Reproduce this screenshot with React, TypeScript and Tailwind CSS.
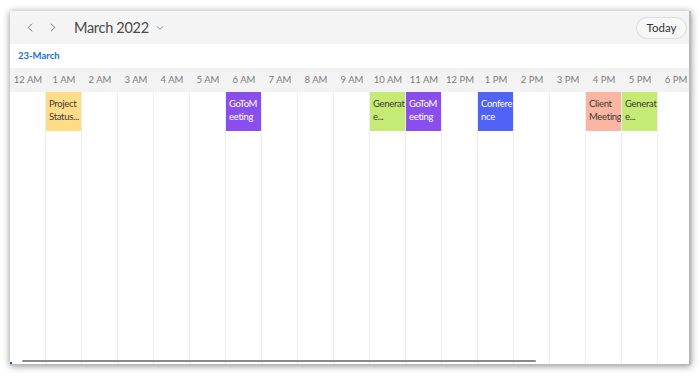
import { ChevronLeft, ChevronRight, ChevronDown } from 'lucide-react'

interface CalEvent {
  hour: number
  lines: string[]
  bg: string
  fg: string
}

const hours = [
  '12 AM', '1 AM', '2 AM', '3 AM', '4 AM', '5 AM', '6 AM', '7 AM', '8 AM', '9 AM',
  '10 AM', '11 AM', '12 PM', '1 PM', '2 PM', '3 PM', '4 PM', '5 PM', '6 PM',
]

const events: CalEvent[] = [
  { hour: 1, lines: ['Project', 'Status...'], bg: 'bg-[#ffdc86]', fg: 'text-[#3a3a3a]' },
  { hour: 6, lines: ['GoToM', 'eeting'], bg: 'bg-[#8a4eee]', fg: 'text-white' },
  { hour: 10, lines: ['Generat', 'e...'], bg: 'bg-[#c6eb74]', fg: 'text-[#3a3a3a]' },
  { hour: 11, lines: ['GoToM', 'eeting'], bg: 'bg-[#8a4eee]', fg: 'text-white' },
  { hour: 13, lines: ['Confere', 'nce'], bg: 'bg-[#5162f7]', fg: 'text-white' },
  { hour: 16, lines: ['Client', 'Meeting'], bg: 'bg-[#fbb6a1]', fg: 'text-[#3a3a3a]' },
  { hour: 17, lines: ['Generat', 'e...'], bg: 'bg-[#c6eb74]', fg: 'text-[#3a3a3a]' },
]

export default function App() {
  return (
    <div className="w-[700px] h-[376px] bg-white pl-[10px] pt-[11px] font-['Lato','Open_Sans',sans-serif]">
      <div className="relative w-[681px] h-[354px] flex flex-col overflow-hidden bg-white border-r-2 border-b border-[#b9b9b9] shadow-[0_1px_7px_rgba(0,0,0,0.45)]">
        {/* Toolbar */}
        <div className="h-[33px] shrink-0 bg-[#f4f4f4] flex items-center pl-[13px] pr-[2px]">
          <button className="w-[14px] flex justify-center text-[#555]">
            <ChevronLeft size={15} strokeWidth={1.4} />
          </button>
          <button className="ml-[9px] w-[14px] flex justify-center text-[#555]">
            <ChevronRight size={15} strokeWidth={1.4} />
          </button>
          <span className="ml-[14px] text-[14.5px] text-[#4a4a4a] tracking-[-0.3px]">March 2022</span>
          <ChevronDown size={10} strokeWidth={1.6} className="ml-[6px] mt-[1px] text-[#555]" />
          <button className="ml-auto h-[22px] w-[51px] rounded-full border border-[#dedede] bg-[#f7f7f7] text-[11.5px] text-[#333]">
            Today
          </button>
        </div>

        {/* Date bar */}
        <div className="h-[24px] shrink-0 flex items-center pl-[8px]">
          <span className="text-[9.5px] font-bold text-[#1673d4]">23-March</span>
        </div>

        {/* Time header */}
        <div className="h-[24px] shrink-0 bg-[#f3f3f3] flex">
          {hours.map((h) => (
            <div key={h} className="w-[36px] shrink-0 flex items-center justify-center pt-[1px] text-[9.5px] text-[#7c7c7c] whitespace-nowrap">
              {h}
            </div>
          ))}
        </div>

        {/* Grid body */}
        <div className="flex-1 flex">
          {hours.map((h, i) => {
            const ev = events.find((e) => e.hour === i)
            return (
              <div key={h} className="w-[36px] shrink-0 border-r border-[#ececec]">
                {ev && (
                  <div className={`h-[39px] pl-[3px] pt-[5px] text-[9.5px] leading-[13px] tracking-[-0.3px] whitespace-nowrap overflow-hidden ${ev.bg} ${ev.fg}`}>
                    {ev.lines.map((l) => (
                      <div key={l}>{l}</div>
                    ))}
                  </div>
                )}
              </div>
            )
          })}
        </div>

        {/* Horizontal scrollbar */}
        <div className="absolute left-[12px] bottom-[2px] w-[514px] h-[2px] rounded-full bg-[#8a8a8a]" />
        <div className="absolute left-0 bottom-0 w-[2px] h-[2px] bg-[#2a4fd0]" />
      </div>
    </div>
  )
}
